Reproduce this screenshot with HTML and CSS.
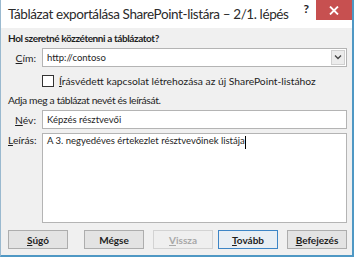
FILE: index.html
```html
<!DOCTYPE html>
<html lang="hu">
<head>
    <meta charset="UTF-8">
    <title>Táblázat exportálása SharePoint-listára</title>
    <link rel="stylesheet" href="styles.css">
</head>
<body>
    <div class="dialog">
        <header class="titlebar">
            <span class="title">Táblázat exportálása SharePoint-listára – 2/1. lépés</span>
            <span class="help">?</span>
            <span class="close">
                <svg width="10" height="9" viewBox="0 0 10 9"><path d="M1 0.5 L9 8.5 M9 0.5 L1 8.5" stroke="#fff" stroke-width="1.8"/></svg>
            </span>
        </header>
        <main class="content">
            <div class="heading">Hol szeretné közzétenni a táblázatot?</div>
            <div class="row">
                <label class="lbl"><u>C</u>ím:</label>
                <div class="field combo">
                    <span class="value">http://contoso</span>
                    <span class="drop">
                        <svg width="8" height="5" viewBox="0 0 8 5"><path d="M1 0.5 L4 3.5 L7 0.5" fill="none" stroke="#444" stroke-width="1.3"/></svg>
                    </span>
                </div>
            </div>
            <div class="check-row">
                <span class="box"></span>
                <span><u>Í</u>rásvédett kapcsolat létrehozása az új SharePoint-listához</span>
            </div>
            <div class="note">Adja meg a táblázat nevét és leírását.</div>
            <div class="row">
                <label class="lbl"><u>N</u>év:</label>
                <div class="field"><span class="value">Képzés résztvevői</span></div>
            </div>
            <div class="row tall">
                <label class="lbl"><u>L</u>eírás:</label>
                <div class="field area"><span class="value">A 3. negyedéves értekezlet résztvevőinek listája</span><span class="caret"></span></div>
            </div>
            <div class="buttons">
                <button class="btn help-btn"><u>S</u>úgó</button>
                <button class="btn cancel">Mégse</button>
                <button class="btn disabled"><u>V</u>issza</button>
                <button class="btn default"><u>T</u>ovább</button>
                <button class="btn finish"><u>B</u>efejezés</button>
            </div>
        </main>
    </div>
</body>
</html>
```

FILE: styles.css
```css
* {
    box-sizing: border-box;
}
body {
    margin: 0;
    padding: 0;
    font-family: Lato, "Open Sans", sans-serif;
    font-size: 10.3px;
    color: #1e1e1e;
    background: #f0f0f0;
}
.dialog {
    width: 354px;
    height: 257px;
    border-left: 1px solid #9ab9cf;
    border-right: 2px solid #4f98c4;
    border-bottom: 2px solid #4f98c4;
    background: #f0f0f0;
    display: flex;
    flex-direction: column;
}
.titlebar {
    height: 28px;
    background: #fff;
    display: flex;
    align-items: flex-start;
}
.title {
    font-size: 13.5px;
    letter-spacing: -0.4px;
    color: #2b2b2b;
    padding: 6px 0 0 7px;
    white-space: nowrap;
    overflow: hidden;
    flex: 1;
}
.help {
    flex-shrink: 0;
    font-weight: bold;
    font-size: 12px;
    color: #222;
    padding-top: 1px;
    margin-right: 7px;
}
.close {
    flex-shrink: 0;
    width: 36px;
    height: 20px;
    background: #c75050;
    display: flex;
    align-items: center;
    justify-content: center;
}
.content {
    flex: 1;
    padding: 2px 5px 0 7px;
    display: flex;
    flex-direction: column;
}
.heading {
    font-weight: bold;
    font-size: 10px;
    letter-spacing: -0.4px;
    line-height: 16px;
}
.row {
    display: flex;
    align-items: center;
    margin-top: 2px;
}
.lbl {
    width: 28px;
    text-align: right;
    margin-right: 6px;
    white-space: nowrap;
}
.field {
    flex: 1;
    height: 19px;
    background: #fff;
    border: 1px solid #b4b4b4;
    display: flex;
    align-items: center;
    padding-left: 4px;
    font-size: 9.5px;
    white-space: nowrap;
}
.combo .value {
    flex: 1;
}
.drop {
    width: 14px;
    height: 15px;
    margin-right: 1px;
    background: #ececec;
    border: 1px solid #d0d0d0;
    display: flex;
    align-items: center;
    justify-content: center;
}
.check-row {
    display: flex;
    align-items: center;
    margin: 8px 0 0 34px;
    height: 12px;
    white-space: nowrap;
}
.box {
    flex-shrink: 0;
    width: 12px;
    height: 12px;
    background: #fff;
    border: 1px solid #333;
    margin-right: 5px;
}
.note {
    line-height: 16px;
    margin-top: 5px;
    letter-spacing: -0.35px;
}
.tall {
    align-items: flex-start;
    margin-top: 4px;
}
.tall .lbl {
    margin-top: 1px;
}
.area {
    height: 90px;
    align-items: flex-start;
    padding-top: 1px;
}
.caret {
    width: 1px;
    height: 13px;
    background: #000;
    margin-top: 1px;
}
.buttons {
    display: flex;
    margin-top: 7px;
}
.btn {
    width: 60px;
    height: 19px;
    padding: 0;
    font-family: inherit;
    font-size: 10px;
    font-weight: bold;
    color: #1e1e1e;
    background: #e3e3e3;
    border: 1px solid #adadad;
    line-height: 16px;
}
.cancel {
    margin-left: 16px;
}
.disabled {
    margin-left: 9px;
    color: #a8a8a8;
    background: #efefef;
    border-color: #d3d3d3;
}
.default {
    margin-left: 5px;
    border-color: #3d85c6;
    background: #e8eef4;
}
.finish {
    margin-left: 9px;
}
```
